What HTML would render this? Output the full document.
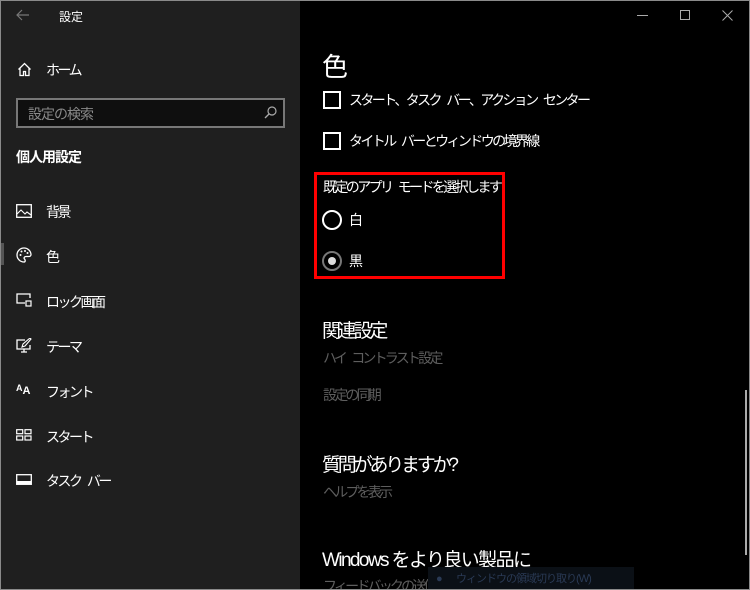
<!DOCTYPE html>
<html><head><meta charset="utf-8"><style>
*{margin:0;padding:0;box-sizing:border-box}
html,body{width:750px;height:590px;overflow:hidden}
body{background:#000;position:relative;font-family:"Liberation Sans","Noto Sans CJK JP",sans-serif;color:#fff}
.a{position:absolute;white-space:pre}
#left{position:absolute;left:0;top:0;width:300px;height:590px;background:#1f1f1f}
#frame{position:absolute;left:0;top:0;width:750px;height:590px;border:1px solid #8a8a8a;pointer-events:none}
.nav{font-size:14px;color:#fff;letter-spacing:-2.5px;word-spacing:5px}
.g{color:#5e5e5e;font-size:14px;letter-spacing:-2.8px;word-spacing:5px}
.t{font-size:14px;letter-spacing:-2.6px;word-spacing:5px}
.h{font-size:19px;letter-spacing:-3.2px}
.cb{position:absolute;width:18px;height:18px;border:2px solid #fff}
</style></head><body>
<div id="left">
<svg class="a" style="left:16px;top:9px" width="14" height="12" viewBox="0 0 14 12"><path d="M13 6H1M6 1L1 6l5 5" stroke="#777" stroke-width="1.2" fill="none"/></svg>
<div class="a" style="left:59px;top:8px;font-size:12px">設定</div>
<svg class="a" style="left:17px;top:62px" width="15" height="15" viewBox="0 0 15 15"><path d="M1.5 7.5L7.5 1.5l6 6M3 6v7.5h3.5v-4h2v4H12V6" stroke="#fff" stroke-width="1.3" fill="none"/></svg>
<div class="a nav" style="left:46px;top:60px">ホーム</div>
<div class="a" style="left:16px;top:98px;width:269px;height:30px;border:2px solid #777;background:#0f0f0f"></div>
<div class="a" style="left:28px;top:104px;font-size:14px;color:#8a8a8a;letter-spacing:-1px">設定の検索</div>
<svg class="a" style="left:264px;top:106px" width="13" height="13" viewBox="0 0 13 13"><circle cx="8" cy="5" r="4" stroke="#aaa" stroke-width="1.2" fill="none"/><path d="M5 8L1 12" stroke="#aaa" stroke-width="1.3"/></svg>
<div class="a" style="left:16px;top:147px;font-size:14px;font-weight:bold;letter-spacing:-1px">個人用設定</div>
<div class="a" style="left:0;top:243px;width:4px;height:22px;background:#555"></div>
<svg class="a" style="left:16px;top:204px" width="16" height="14" viewBox="0 0 16 14"><rect x="0.7" y="0.7" width="14.6" height="12.6" stroke="#fff" stroke-width="1.3" fill="none"/><path d="M1 10l4-4 4 4 2-2 4 3" stroke="#fff" stroke-width="1.1" fill="none"/></svg>
<div class="a nav" style="left:46px;top:202px">背景</div>
<svg class="a" style="left:16px;top:247px" width="16" height="16" viewBox="0 0 16 16"><path d="M8 1a7 7 0 1 0 0 14c1.5 0 1.5-2 0.5-3s0-2.5 1.5-2.5h3A2 2 0 0 0 15 7.5 7 7 0 0 0 8 1z" stroke="#fff" stroke-width="1.3" fill="none"/><circle cx="4.5" cy="8" r="1" fill="#fff"/><circle cx="5.5" cy="4.5" r="1" fill="#fff"/><circle cx="9" cy="4" r="1" fill="#fff"/><circle cx="11.5" cy="6" r="1" fill="#fff"/></svg>
<div class="a nav" style="left:46px;top:247px">色</div>
<svg class="a" style="left:16px;top:293px" width="16" height="14" viewBox="0 0 16 14"><path d="M9 10H1V1h13v4" stroke="#fff" stroke-width="1.3" fill="none"/><rect x="10" y="8" width="5" height="5" stroke="#fff" stroke-width="1.2" fill="none"/></svg>
<div class="a nav" style="left:46px;top:292px">ロック画面</div>
<svg class="a" style="left:16px;top:338px" width="16" height="15" viewBox="0 0 16 15"><path d="M9 2H1v9h13V7M5 14h6M8 11v3" stroke="#fff" stroke-width="1.3" fill="none"/><path d="M6 9l1-3 7-6 1 1-6 7z" stroke="#fff" stroke-width="1.1" fill="none"/></svg>
<div class="a nav" style="left:46px;top:337px">テーマ</div>
<div class="a" style="left:16px;top:383px;font-size:11px;font-weight:bold"><span style="font-size:9px;vertical-align:3px">A</span>A</div>
<div class="a nav" style="left:46px;top:382px">フォント</div>
<svg class="a" style="left:16px;top:429px" width="16" height="12" viewBox="0 0 16 12"><rect x="0.7" y="0.7" width="6" height="4" stroke="#fff" stroke-width="1.2" fill="none"/><rect x="9" y="0.7" width="6" height="4" stroke="#fff" stroke-width="1.2" fill="none"/><rect x="0.7" y="7" width="6" height="4" stroke="#fff" stroke-width="1.2" fill="none"/><rect x="9" y="7" width="6" height="4" stroke="#fff" stroke-width="1.2" fill="none"/></svg>
<div class="a nav" style="left:46px;top:427px">スタート</div>
<svg class="a" style="left:16px;top:474px" width="16" height="11" viewBox="0 0 16 11"><rect x="0.7" y="0.7" width="14.6" height="9.6" stroke="#fff" stroke-width="1.3" fill="none"/><rect x="1" y="7" width="14" height="3" fill="#fff"/></svg>
<div class="a nav" style="left:46px;top:471px">タスク バー</div>
</div>
<div class="a" style="left:637px;top:15px;width:11px;height:1px;background:#aaa"></div>
<div class="a" style="left:680px;top:10px;width:10px;height:10px;border:1px solid #aaa"></div>
<svg class="a" style="left:722px;top:10px" width="11" height="11" viewBox="0 0 11 11"><path d="M0.5 0.5l10 10M10.5 0.5l-10 10" stroke="#aaa"/></svg>
<div class="a" style="left:322px;top:52px;font-size:26px;line-height:30px">色</div>
<div class="cb" style="left:323px;top:91px"></div>
<div class="a t" style="left:349px;top:90px">スタート、タスク バー、アクション センター</div>
<div class="cb" style="left:323px;top:132px"></div>
<div class="a t" style="left:349px;top:131px">タイトル バーとウィンドウの境界線</div>
<div class="a" style="left:314px;top:172px;width:191px;height:107px;border:3px solid #f00"></div>
<div class="a t" style="left:323px;top:177px">既定のアプリ モードを選択します</div>
<div class="a" style="left:322px;top:210px;width:20px;height:20px;border:2px solid #fff;border-radius:50%"></div>
<div class="a" style="left:349px;top:210px;font-size:14px">白</div>
<div class="a" style="left:322px;top:251px;width:20px;height:20px;border:2px solid #777;border-radius:50%"></div>
<div class="a" style="left:328px;top:257px;width:8px;height:8px;background:#ddd;border-radius:50%"></div>
<div class="a" style="left:349px;top:251px;font-size:14px">黒</div>
<div class="a h" style="left:322px;top:316px">関連設定</div>
<div class="a g" style="left:323px;top:348px">ハイ コントラスト設定</div>
<div class="a g" style="left:323px;top:385px">設定の同期</div>
<div class="a h" style="left:322px;top:450px">質問がありますか?</div>
<div class="a g" style="left:323px;top:482px">ヘルプを表示</div>
<div class="a h" style="left:322px;top:545px;letter-spacing:-1.6px">Windows をより良い製品に</div>
<div class="a g" style="left:323px;top:576px">フィードバックの送信</div>
<div class="a" style="left:428px;top:567px;width:206px;height:22px;background:#0b1016;font-size:11px;color:#2a3a55;padding:3px 0 0 8px;letter-spacing:-1px">●       ウィンドウの領域切り取り(W)</div>
<div class="a" style="left:745px;top:390px;width:2px;height:165px;background:#aaa"></div>
<div id="frame"></div>
</body></html>
